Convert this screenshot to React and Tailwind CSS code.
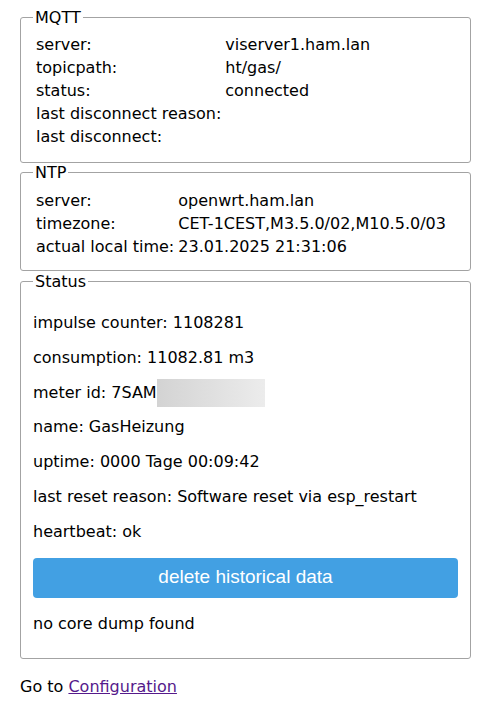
import React from 'react';

const mqtt = [
  ['server:', 'viserver1.ham.lan'],
  ['topicpath:', 'ht/gas/'],
  ['status:', 'connected'],
  ['last disconnect reason:', ''],
  ['last disconnect:', ''],
];

const ntp = [
  ['server:', 'openwrt.ham.lan'],
  ['timezone:', 'CET-1CEST,M3.5.0/02,M10.5.0/03'],
  ['actual local time:', '23.01.2025 21:31:06'],
];

function Box({ title, children, className = '' }) {
  return (
    <fieldset className={`w-[451px] border border-[#a3a3a3] rounded-[3px] px-3 ${className}`}>
      <legend className="px-0.5 leading-[19px]">{title}</legend>
      {children}
    </fieldset>
  );
}

function InfoTable({ rows }) {
  return (
    <table className="border-separate border-spacing-0.5">
      <tbody>
        {rows.map(([k, v]) => (
          <tr key={k}>
            <td className="px-px py-0 h-[21px] leading-[21px] whitespace-nowrap">{k}</td>
            <td className="px-px py-0 h-[21px] leading-[21px] whitespace-nowrap">{v}</td>
          </tr>
        ))}
      </tbody>
    </table>
  );
}

export default function App() {
  return (
    <div className="min-h-[711px] bg-white px-5 pt-2 text-[16px] text-black font-['DejaVu_Sans',sans-serif]">
      <Box title="MQTT" className="pt-[5px] pb-[13px]">
        <InfoTable rows={mqtt} />
      </Box>

      <Box title="NTP" className="pt-[6px] pb-[11px]">
        <InfoTable rows={ntp} />
      </Box>

      <Box title="Status" className="mt-px pt-[7px] pb-[9px]">
        <p className="my-4 leading-[18.8px]">impulse counter: 1108281</p>
        <p className="my-4 leading-[18.8px]">consumption: 11082.81 m3</p>
        <p className="my-4 leading-[18.8px]">
          meter id: 7SAM
          <span className="inline-block align-middle -my-[6px] w-[108px] h-[28px] bg-gradient-to-r from-[#d3d3d3] to-[#ececec]" />
        </p>
        <p className="my-4 leading-[18.8px]">name: GasHeizung</p>
        <p className="my-4 leading-[18.8px]">uptime: 0000 Tage 00:09:42</p>
        <p className="my-4 leading-[18.8px]">last reset reason: Software reset via esp_restart</p>
        <p className="my-4 leading-[18.8px]">heartbeat: ok</p>
        <button className="block w-full h-10 rounded-[4px] bg-[#42a0e3] text-white text-[19px] font-['Liberation_Sans',Arial,sans-serif]">
          delete historical data
        </button>
        <p className="my-4 leading-[19px]">no core dump found</p>
      </Box>

      <p className="mt-[18px] mb-4 leading-[19px]">
        Go to <a href="#" className="text-[#551a8b] underline">Configuration</a>
      </p>
    </div>
  );
}
